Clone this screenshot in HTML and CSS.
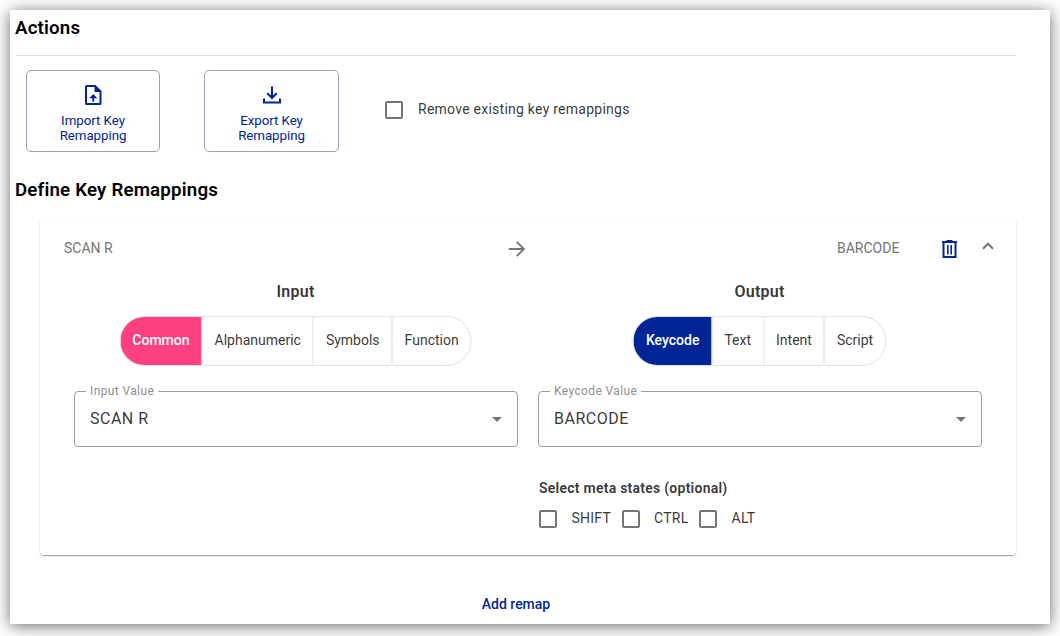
FILE: index.html
```html
<!DOCTYPE html>
<html lang="en">
<head>
<meta charset="utf-8">
<title>Key Remapping</title>
<link rel="stylesheet" href="styles.css">
</head>
<body>
<main class="panel">
  <h2 class="heading"><span>Actions</span></h2>
  <section class="actions">
    <button class="action-btn">
      <svg class="icon" viewBox="0 0 24 24"><path fill="currentColor" fill-rule="evenodd" d="M5.500 2H14.500l6 6v12.500a1.500 1.500 0 0 1-1.500 1.500H5.500A1.500 1.500 0 0 1 4 20.500v-17A1.500 1.500 0 0 1 5.500 2zM6 4v16h12.500V9H13.500V4zM11.300 18.500v-3.200H8.200l4.050-4.300 4.050 4.300h-3.100v3.200z"/></svg>
      <span class="action-label">Import Key<br>Remapping</span>
    </button>
    <button class="action-btn action-export">
      <svg class="icon" viewBox="0 0 24 24"><path fill="none" stroke="currentColor" stroke-width="2.100" d="M12 3.500v11.500M7.300 10.200l4.700 4.700 4.700-4.700M4 15.500V19.500h16v-4"/></svg>
      <span class="action-label">Export Key<br>Remapping</span>
    </button>
    <label class="check check-remove"><i class="box"></i><span class="check-text">Remove existing key remappings</span></label>
  </section>
  <h2 class="heading heading-define"><span>Define Key Remappings</span></h2>
  <section class="card">
    <header class="card-head">
      <span class="from">SCAN R</span>
      <svg class="arrow" viewBox="0 0 18 18"><path fill="none" stroke="currentColor" stroke-width="1.900" d="M1 9h15M8.700 1.800L15.900 9l-7.200 7.200"/></svg>
      <span class="to">BARCODE</span>
      <svg class="trash" viewBox="0 0 18 20"><path fill="none" stroke="currentColor" stroke-width="2" d="M1 3h15M2.500 3v15h12V3"/><path fill="none" stroke="currentColor" stroke-width="1.600" d="M6.800 6v9.500M10.200 6v9.500"/><path fill="currentColor" d="M5.500 1h6v2h-6z"/></svg>
      <svg class="chevron" viewBox="0 0 12 8"><path fill="none" stroke="currentColor" stroke-width="2" d="M1 6.700l5-5 5 5"/></svg>
    </header>
    <div class="columns">
      <div class="column">
        <h3 class="title"><span>Input</span></h3>
        <div class="toggle toggle-input"><span class="seg on">Common</span><span class="seg">Alphanumeric</span><span class="seg">Symbols</span><span class="seg">Function</span></div>
        <fieldset class="field"><legend class="legend">Input Value</legend><span class="value">SCAN R</span><i class="caret"></i></fieldset>
      </div>
      <div class="column">
        <h3 class="title"><span>Output</span></h3>
        <div class="toggle toggle-output"><span class="seg on">Keycode</span><span class="seg">Text</span><span class="seg">Intent</span><span class="seg">Script</span></div>
        <fieldset class="field"><legend class="legend">Keycode Value</legend><span class="value">BARCODE</span><i class="caret"></i></fieldset>
        <h4 class="meta-title"><span>Select meta states (optional)</span></h4>
        <div class="meta">
          <label class="check"><i class="box"></i><span class="check-text">SHIFT</span></label>
          <label class="check"><i class="box"></i><span class="check-text">CTRL</span></label>
          <label class="check"><i class="box"></i><span class="check-text">ALT</span></label>
        </div>
      </div>
    </div>
  </section>
  <footer class="foot"><button class="add">Add remap</button></footer>
</main>
</body>
</html>
```
FILE: styles.css
```css
* { box-sizing: border-box; }
body {
  margin: 0;
  padding: 10px;
  height: 636px;
  overflow: hidden;
  background: #fff;
  font-family: Roboto, sans-serif;
  font-size: 14px;
  color: rgba(0, 0, 0, .8);
}
.panel {
  width: 1040px;
  height: 614px;
  padding: 5px 34px 0 6px;
  background: #fff;
  box-shadow: 0 2px 15px rgba(0, 0, 0, .58);
}
svg { display: block; flex: none; }
button { font-family: inherit; background: none; cursor: pointer; }
.heading {
  margin: 0 0 0 -1px;
  font-size: 18.72px;
  line-height: 26px;
  font-weight: 600;
  letter-spacing: .18px;
  color: #000;
}
.actions {
  display: flex;
  margin-top: 14px;
  padding: 14px 10px 0;
  border-top: 1px solid #dedede;
}
.action-btn {
  display: flex;
  flex-direction: column;
  align-items: center;
  width: 134px;
  height: 82px;
  padding: 12px 0 0;
  border: 1px solid #949fc4;
  border-radius: 5px;
  color: #002596;
  font-size: 13.333px;
  line-height: 15px;
  letter-spacing: -.06px;
}
.action-export { width: 135px; margin-left: 44px; }
.icon { width: 24px; height: 24px; margin-bottom: 6px; }
.check { display: flex; align-items: center; height: 20px; letter-spacing: .25px; }
.box {
  width: 18px;
  height: 18px;
  margin-right: 15px;
  border: 2px solid #757575;
  border-radius: 2px;
}
.check-text { margin-top: -2px; }
.check-remove { margin: 30px 0 0 46px; }
.heading-define { margin-top: 25px; }
.card {
  width: 976px;
  height: 338px;
  margin: 14px 0 0 24px;
  padding: 20px 0 0;
  border-radius: 4px;
  background: #fff;
  box-shadow: 0 2px 1px -1px rgba(0, 0, 0, .2), 0 1px 1px rgba(0, 0, 0, .14), 0 1px 3px rgba(0, 0, 0, .12);
}
.card-head {
  display: flex;
  align-items: center;
  height: 24px;
  padding: 0 22px 0 24px;
  color: #757575;
}
.from { width: 444px; margin-top: -2px; }
.arrow { width: 18px; height: 18px; }
.to { margin: -2px 0 0 311px; width: 104px; }
.trash { width: 18px; height: 20px; color: #002596; }
.chevron { width: 12px; height: 8px; margin: -6px 0 0 23px; }
.columns { display: flex; gap: 20px; padding: 0 34px; }
.column { width: 444px; }
.title {
  margin: 19px 0 12px;
  font-size: 16px;
  line-height: 24px;
  font-weight: 600;
  letter-spacing: .25px;
  text-align: center;
}
.title span { margin-right: 1px; }
.toggle {
  display: flex;
  width: max-content;
  height: 50px;
  margin: 0 auto;
  border: 1px solid #e0e0e0;
  border-radius: 25px;
  overflow: hidden;
  line-height: 46px;
}
.seg { padding: 0 12px; border-left: 1px solid #e0e0e0; }
.seg:first-child { border-left: 0; }
.on { color: #fff; font-weight: 500; }
.toggle-input { transform: translateX(-.5px); }
.toggle-output { transform: translateX(-.5px); }
.toggle-input .on { background: #ff4081; }
.toggle-output .on { background: #002596; }
.field {
  display: flex;
  align-items: center;
  justify-content: space-between;
  min-width: 0;
  height: 63px;
  margin: 18px 0 0;
  padding: 0 15px 7px 15px;
  border: 1px solid #9e9e9e;
  border-radius: 4px;
}
.legend {
  height: 14px;
  margin-left: -4px;
  padding: 0 4px;
  font-size: 12px;
  line-height: 15px;
  letter-spacing: .38px;
  color: #8f8f8f;
}
.value { font-size: 16px; letter-spacing: .5px; }
.caret {
  margin-top: 2px;
  border: 5px solid transparent;
  border-top-color: #757575;
  border-bottom: 0;
}
.meta-title {
  margin: 31px 0 0 1px;
  font-size: 14px;
  line-height: 20px;
  font-weight: 600;
  letter-spacing: .25px;
}
.meta { display: flex; gap: 10.500px; margin: 11px 0 0 1px; }
.meta .box { margin-right: 14.500px; }
.foot { margin-top: 37px; text-align: center; }
.add {
  padding: 0;
  border: 0;
  color: #002596;
  font-size: 14px;
  font-weight: 500;
  line-height: 24px;
}
```
